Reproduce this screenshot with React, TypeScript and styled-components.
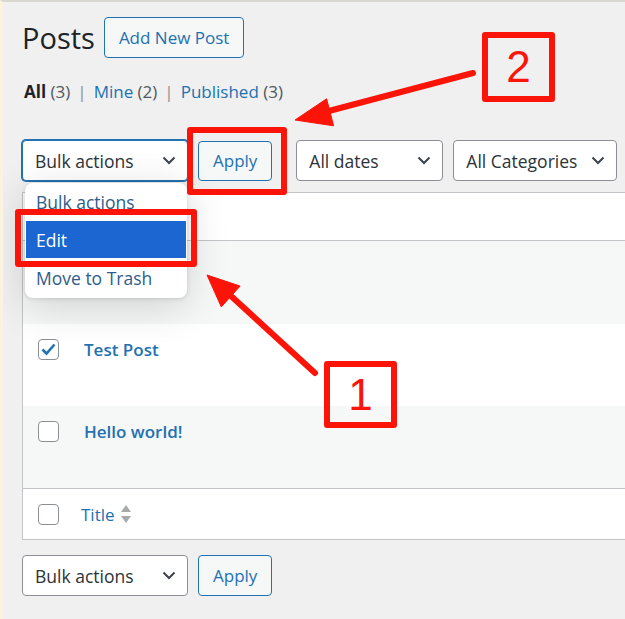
import React from "react";
import styled, { createGlobalStyle } from "styled-components";

const GlobalStyle = createGlobalStyle`
    html, body {
        margin: 0;
        padding: 0;
        background: #f0f0f1;
        overflow: hidden;
    }
    body {
        font-family: "Open Sans", "Noto Sans", sans-serif;
        color: #1d2327;
    }
`;

const Page = styled.div`
    position: relative;
    width: 625px;
    height: 619px;
    box-sizing: border-box;
    overflow: hidden;
    border-left: 3px solid #fbf3dd;
    border-top: 2px solid #d8d8d1;
    padding: 15px 0 0 19px;
`;

const Header = styled.div`
    display: flex;
    align-items: center;
    gap: 9px;
`;

const Title = styled.h1`
    margin: 0;
    font-size: 29px;
    font-weight: 400;
    color: #1d2327;
    line-height: 41px;
`;

const Button = styled.button<{ $h?: number }>`
    height: ${(p) => p.$h ?? 40}px;
    padding: 0 14px;
    border: 1px solid #2271b1;
    border-radius: 4px;
    background: #f6f7f7;
    color: #2271b1;
    font-family: inherit;
    font-size: 17px;
    cursor: pointer;
`;

const Views = styled.div`
    margin-top: 22px;
    display: flex;
    align-items: center;
    gap: 7px;
    font-size: 17px;
    line-height: 24px;
    padding-left: 2px;
`;

const View = styled.span<{ $current?: boolean }>`
    color: ${(p) => (p.$current ? "#1d2327" : "#2271b1")};
    font-weight: ${(p) => (p.$current ? 700 : 400)};
`;

const Count = styled.span`
    color: #50575e;
    font-weight: 400;
`;

const Sep = styled.span`
    color: #8c8f94;
`;

const Toolbar = styled.div<{ $top: number }>`
    margin-top: ${(p) => p.$top}px;
    display: flex;
    align-items: center;
    gap: 10px;
`;

const SelectWrap = styled.div`
    position: relative;
`;

const Select = styled.div<{ $w: number; $focus?: boolean }>`
    width: ${(p) => p.$w}px;
    height: 41px;
    box-sizing: border-box;
    display: flex;
    align-items: center;
    justify-content: space-between;
    padding: 0 11px 0 12px;
    background: #fff;
    border: 1px solid ${(p) => (p.$focus ? "#2271b1" : "#8c8f94")};
    box-shadow: ${(p) => (p.$focus ? "0 0 0 1px #2271b1" : "none")};
    border-radius: 4px;
    font-size: 17.5px;
    color: #2c3338;
    white-space: nowrap;
`;

const ApplyGap = styled.div`
    margin-right: 14px;
`;

const Menu = styled.div`
    position: absolute;
    left: 3px;
    top: 43px;
    width: 162px;
    padding: 0 0 2px;
    box-sizing: border-box;
    background: #fff;
    border-radius: 8px;
    box-shadow: 0 8px 40px rgba(0, 0, 0, 0.16), 0 1px 4px rgba(0, 0, 0, 0.12);
    z-index: 5;
`;

const MenuItem = styled.div<{ $active?: boolean }>`
    height: ${(p) => (p.$active ? 39 : 37)}px;
    display: flex;
    align-items: center;
    padding-left: 11px;
    font-size: 17.5px;
    color: ${(p) => (p.$active ? "#fff" : "#2d5d8b")};
    background: ${(p) => (p.$active ? "#1b66d1" : "transparent")};
    box-shadow: ${(p) => (p.$active ? "inset 0 0 0 1px #fff" : "none")};
`;

const Table = styled.div`
    margin-top: 11px;
    width: 640px;
    border: 1px solid #c3c4c7;
    background: #fff;
`;

const Row = styled.div<{ $h: number; $alt?: boolean; $line?: "top" | "bottom"; $center?: boolean }>`
    height: ${(p) => p.$h}px;
    box-sizing: border-box;
    display: flex;
    align-items: ${(p) => (p.$center ? "center" : "flex-start")};
    padding: ${(p) => (p.$center ? "0 15px" : "15px 15px 0")};
    background: ${(p) => (p.$alt ? "#f6f7f7" : "#fff")};
    border-top: ${(p) => (p.$line === "top" ? "1px solid #c3c4c7" : "none")};
    border-bottom: ${(p) => (p.$line === "bottom" ? "1px solid #c3c4c7" : "none")};
`;

const Check = styled.span`
    width: 21px;
    height: 21px;
    box-sizing: border-box;
    flex: none;
    display: flex;
    align-items: center;
    justify-content: center;
    border: 1px solid #8c8f94;
    border-radius: 4px;
    background: #fff;
`;

const PostLink = styled.span<{ $gap: number; $bold?: boolean }>`
    margin-left: ${(p) => p.$gap}px;
    font-size: 17px;
    line-height: 21px;
    color: #2271b1;
    font-weight: ${(p) => (p.$bold ? 600 : 400)};
    display: flex;
    align-items: center;
    gap: 5px;
`;

// annotation boxes sit on the page's padding box (3px left border, 2px top border)
const Mark = styled.div<{ $x: number; $y: number; $w: number; $h: number }>`
    position: absolute;
    left: ${(p) => p.$x}px;
    top: ${(p) => p.$y}px;
    width: ${(p) => p.$w}px;
    height: ${(p) => p.$h}px;
    box-sizing: border-box;
    border: 6px solid #fb1407;
    border-radius: 3px;
    display: flex;
    align-items: center;
    justify-content: center;
    font-family: "Liberation Sans", Arial, sans-serif;
    font-size: 44px;
    color: #fb1407;
    z-index: 6;
`;

const Arrows = styled.svg`
    position: absolute;
    left: 0;
    top: 0;
    z-index: 7;
    pointer-events: none;
`;

const Chevron = () => (
    <svg width="14" height="9" viewBox="0 0 14 9">
        <polyline points="1.5,1.5 7,7 12.5,1.5" fill="none" stroke="#3c434a" strokeWidth="2" />
    </svg>
);

const Tick = () => (
    <svg width="15" height="13" viewBox="0 0 15 13">
        <polyline points="1.5,6.5 5.5,10.5 13.5,1.5" fill="none" stroke="#2271b1" strokeWidth="2.6" />
    </svg>
);

const Sort = () => (
    <svg width="12" height="20" viewBox="0 0 12 20">
        <polygon points="6,1 11,8 1,8" fill="#a7aaad" />
        <polygon points="1,12 11,12 6,19" fill="#a7aaad" />
    </svg>
);

const BulkSelect = ({ focus, open }: { focus?: boolean; open?: boolean }) => (
    <SelectWrap>
        <Select $w={166} $focus={focus}>
            Bulk actions <Chevron />
        </Select>
        {open && (
            <Menu>
                <MenuItem>Bulk actions</MenuItem>
                <MenuItem $active>Edit</MenuItem>
                <MenuItem>Move to Trash</MenuItem>
            </Menu>
        )}
    </SelectWrap>
);

const App = () => {
    return (
        <>
            <GlobalStyle />
            <Page>
                <Header>
                    <Title>Posts</Title>
                    <Button $h={41}>Add New Post</Button>
                </Header>
                <Views>
                    <View $current>
                        All <Count>(3)</Count>
                    </View>
                    <Sep>|</Sep>
                    <View>
                        Mine <Count>(2)</Count>
                    </View>
                    <Sep>|</Sep>
                    <View>
                        Published <Count>(3)</Count>
                    </View>
                </Views>

                <Toolbar $top={36}>
                    <BulkSelect focus open />
                    <ApplyGap>
                        <Button>Apply</Button>
                    </ApplyGap>
                    <Select $w={147}>
                        All dates <Chevron />
                    </Select>
                    <Select $w={164}>
                        All Categories <Chevron />
                    </Select>
                </Toolbar>

                <Table>
                    {/* header row sits under the open menu */}
                    <Row $h={48} $center $line="bottom" />
                    <Row $h={83} $alt />
                    <Row $h={82}>
                        <Check>
                            <Tick />
                        </Check>
                        <PostLink $gap={25} $bold>
                            Test Post
                        </PostLink>
                    </Row>
                    <Row $h={82} $alt>
                        <Check />
                        <PostLink $gap={25} $bold>
                            Hello world!
                        </PostLink>
                    </Row>
                    <Row $h={51} $center $line="top">
                        <Check />
                        <PostLink $gap={22}>
                            Title <Sort />
                        </PostLink>
                    </Row>
                </Table>

                <Toolbar $top={15}>
                    <BulkSelect />
                    <Button $h={41}>Apply</Button>
                </Toolbar>

                <Mark $x={184} $y={125} $w={100} $h={68} />
                <Mark $x={12} $y={207} $w={182} $h={58} />
                <Mark $x={479} $y={30} $w={73} $h={70}>2</Mark>
                <Mark $x={321} $y={359} $w={73} $h={67}>1</Mark>

                <Arrows width="625" height="619" viewBox="0 0 625 619">
                    <g fill="#fb1407" stroke="#fb1407">
                        <line x1="470" y1="71" x2="322" y2="110" strokeWidth="6" strokeLinecap="round" />
                        <polygon points="292,118 323.6,96.8 330.6,123.8" strokeWidth="1" strokeLinejoin="round" />
                        <line x1="312" y1="371" x2="228" y2="294" strokeWidth="6" strokeLinecap="round" />
                        <polygon points="204,273 237.1,284.1 218.3,304.9" strokeWidth="1" strokeLinejoin="round" />
                    </g>
                </Arrows>
            </Page>
        </>
    );
};

export default App;
